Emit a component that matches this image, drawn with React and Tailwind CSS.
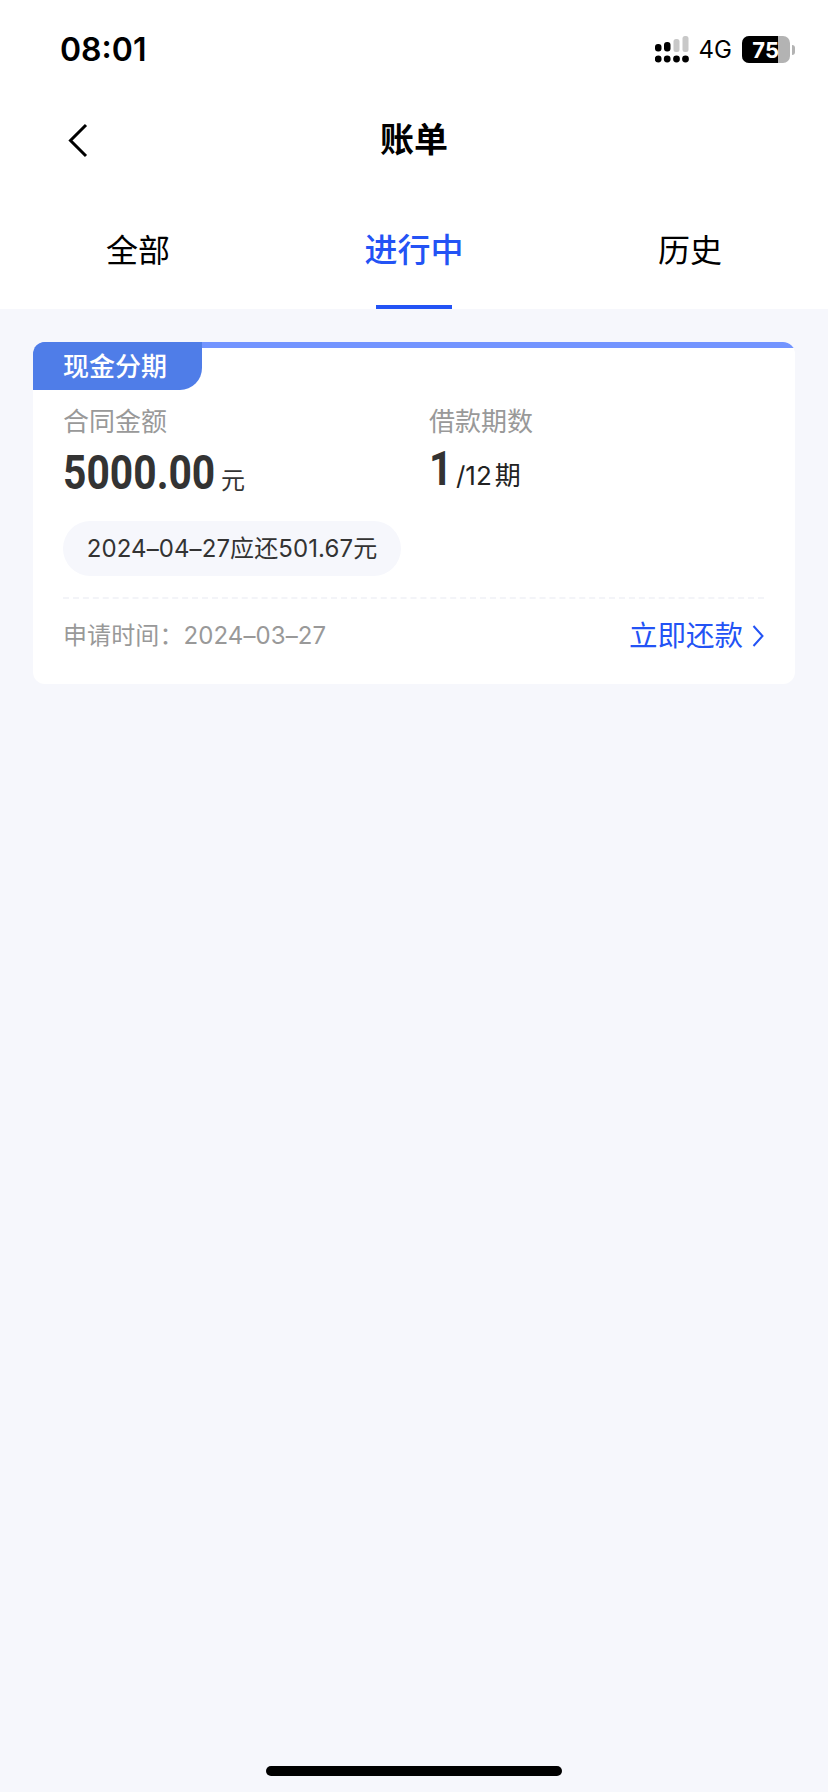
const FONT = "font-['Inter','Noto_Sans_CJK_SC',sans-serif]";
const NUM = "font-['Roboto',sans-serif]";

const Signal = () => (
  <svg width="34" height="27" viewBox="0 0 34 27" className="block">
    <rect x="0" y="8" width="6.5" height="7.5" rx="3" fill="#000" />
    <rect x="9" y="6" width="6.5" height="9.5" rx="3" fill="#000" />
    <rect x="18.5" y="3" width="6" height="13" rx="2.5" fill="#c8c8c8" />
    <rect x="27.5" y="0" width="6" height="16" rx="2.5" fill="#c8c8c8" />
    <circle cx="3.2" cy="23" r="3.4" fill="#000" />
    <circle cx="12.2" cy="23" r="3.4" fill="#000" />
    <circle cx="21.5" cy="23" r="3.4" fill="#000" />
    <circle cx="30.5" cy="23" r="3.4" fill="#000" />
  </svg>
);

const Battery = () => (
  <div className="flex items-center">
    <div className="flex h-[27px] w-[48px] overflow-hidden rounded-[7px] bg-[#b3b3b3]">
      <div className="flex w-[36px] items-center justify-end bg-black">
        <span className="-mr-[1px] text-[22px] leading-none font-bold text-white">75</span>
      </div>
    </div>
    <div className="ml-[2px] h-[10px] w-[3px] rounded-r-full bg-[#b3b3b3]" />
  </div>
);

export default function App() {
  return (
    <div className={`${FONT} flex min-h-[1792px] flex-col bg-[#f6f7fc]`}>
      {/* status bar */}
      <div className="flex h-[100px] items-start justify-between bg-white pt-[33px] pr-[33px] pl-[60px]">
        <span className="text-[32px] leading-[34px] font-semibold text-black">08:01</span>
        <div className="mt-[3px] flex items-center">
          <Signal />
          <span className="mr-[10px] ml-[10px] text-[24px] leading-none text-black">4G</span>
          <Battery />
        </div>
      </div>

      {/* nav */}
      <div className="relative flex h-[80px] items-center justify-center bg-white">
        <svg width="22" height="36" viewBox="0 0 22 36" className="absolute top-[22px] left-[67px]" fill="none">
          <path d="M19 3 L3.5 18.5 L19 34" stroke="#000" strokeWidth="3" />
        </svg>
        <span className="text-[34px] leading-none font-semibold text-black">账单</span>
      </div>

      {/* tabs */}
      <div className="grid h-[129px] grid-cols-3 bg-white">
        <div className="flex items-center justify-center pt-[12px] text-[32px] text-black">全部</div>
        <div className="relative flex items-center justify-center pt-[12px] text-[33px] font-medium text-[#2353f5]">
          进行中
          <div className="absolute bottom-0 left-[100px] h-[4px] w-[76px] bg-[#2353f5]" />
        </div>
        <div className="flex items-center justify-center pt-[12px] text-[32px] text-black">历史</div>
      </div>

      {/* card */}
      <div className="mx-[33px] mt-[33px] overflow-hidden rounded-[12px] bg-white">
        <div className="h-[6px] bg-[#7294ff]" />
        <div className="-mt-[6px] flex h-[48px] w-[169px] items-center rounded-br-[22px] bg-[#4f7de8] pl-[30px] text-[26px] font-medium text-white">
          现金分期
        </div>
        <div className="pr-[31px] pl-[30px]">
          <div className="mt-[17px] grid grid-cols-[366px_1fr]">
            <div>
              <div className="text-[26px] leading-[30px] text-[#999999]">合同金额</div>
              <div className="mt-[6px] flex items-baseline">
                <span className={`${NUM} inline-block w-[158px] origin-left scale-x-[0.85] text-[48px] leading-[60px] font-bold text-[#333333]`}>5000.00</span>
                <span className="text-[24px] text-[#333333]">元</span>
              </div>
            </div>
            <div>
              <div className="text-[26px] leading-[30px] text-[#999999]">借款期数</div>
              <div className="mt-[2px] flex items-baseline text-[#333333]">
                <span className={`${NUM} inline-block w-[27px] origin-left scale-x-[0.85] text-[48px] leading-[60px] font-bold`}>1</span>
                <span className="text-[26px] text-[#222222]">/12<span className="ml-[3px]">期</span></span>
              </div>
            </div>
          </div>
          <div className="mt-[18px] flex h-[55px] w-[338px] items-center justify-center rounded-full bg-[#f6f7fc] text-[24px] tracking-[0.1px] text-[#333333]">
            2024–04–27应还501.67元
          </div>
          <div className="mt-[21px] border-t-2 border-dashed border-[#f3f4f8]" />
          <div className="flex h-[85px] items-center justify-between pb-[11px]">
            <span className="text-[24px] tracking-[0.1px] text-[#999999]">申请时间：2024–03–27</span>
            <span className="flex items-center text-[28.5px] text-[#2353f5]">
              立即还款
              <svg width="12" height="24" viewBox="0 0 12 24" className="ml-[9px]" fill="none">
                <path d="M1.5 2 L10.5 12 L1.5 22" stroke="#2353f5" strokeWidth="2" />
              </svg>
            </span>
          </div>
        </div>
      </div>

      {/* home indicator */}
      <div className="mt-auto flex justify-center pb-[16px]">
        <div className="h-[10px] w-[296px] rounded-full bg-black" />
      </div>
    </div>
  );
}
